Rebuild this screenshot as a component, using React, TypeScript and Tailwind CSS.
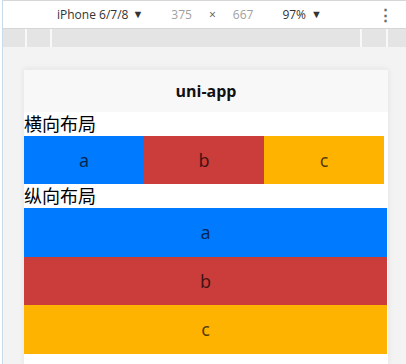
const horizontal = [
  { label: "a", bg: "bg-[#007aff]" },
  { label: "b", bg: "bg-[#cb3d3a]" },
  { label: "c", bg: "bg-[#fdb300]" },
];

const vertical = [
  { label: "a", bg: "bg-[#007aff]", h: "h-[49px]" },
  { label: "b", bg: "bg-[#cb3d3a]", h: "h-[48px]" },
  { label: "c", bg: "bg-[#fdb300]", h: "h-[49px]" },
];

const DevToolbar = () => (
  <div className="flex h-[29px] items-center border-b border-t border-[#d6d6d6] bg-white text-[12px] text-[#333] [font-family:'Open_Sans','Noto_Sans',sans-serif]">
    <span className="ml-[54px]">iPhone 6/7/8</span>
    <span className="ml-[4px] text-[11px]">▼</span>
    <span className="ml-[28px] text-[#a0a0a0]">375</span>
    <span className="ml-[17px] text-[#555]">×</span>
    <span className="ml-[17px] text-[#a0a0a0]">667</span>
    <span className="ml-[29px]">97%</span>
    <span className="ml-[5px] text-[11px]">▼</span>
    <span className="ml-auto mr-[13px] text-[15px] font-bold text-[#666]">⋮</span>
  </div>
);

const Ruler = () => (
  <div className="flex h-[18px] bg-[#e4e4e4]">
    <div className="w-[22px]" />
    <div className="w-[2px] bg-[#f8f8f8]" />
    <div className="w-[23px]" />
    <div className="w-[2px] bg-[#f8f8f8]" />
    <div className="flex-1" />
    <div className="w-[2px] bg-[#f8f8f8]" />
    <div className="w-[24px]" />
    <div className="w-[2px] bg-[#f8f8f8]" />
    <div className="w-[18px]" />
  </div>
);

export default function App() {
  return (
    <div className="flex h-[364px] w-[406px] overflow-hidden bg-[#f3f3f3]">
      <div className="w-[2px] bg-white" />
      <div className="w-px bg-[#c9dcec]" />
      <div className="flex flex-1 flex-col">
        <DevToolbar />
        <Ruler />
        <div className="flex-1 pl-[21px] pt-[22px]">
          <div className="h-full w-[364px] border-t border-[#ececec] bg-white shadow-[0_0_6px_rgba(0,0,0,0.08)]">
            <div className="flex h-[42px] items-center justify-center bg-[#f8f8f8] text-[16px] font-bold text-[#111] [font-family:'Open_Sans','Noto_Sans',sans-serif]">
              uni-app
            </div>
            <div className="text-[18px] text-black [font-family:'Noto_Sans','Noto_Sans_CJK_SC',sans-serif]">
              <div className="h-[24px] leading-[24px]">横向布局</div>
              <div className="flex">
                {horizontal.map((item) => (
                  <div
                    key={item.label}
                    className={`flex h-[48px] w-[120px] items-center justify-center text-black/70 ${item.bg}`}
                  >
                    {item.label}
                  </div>
                ))}
              </div>
              <div className="h-[24px] leading-[24px]">纵向布局</div>
              <div className="flex flex-col">
                {vertical.map((item) => (
                  <div
                    key={item.label}
                    className={`flex w-[363px] items-center justify-center text-black/70 ${item.h} ${item.bg}`}
                  >
                    {item.label}
                  </div>
                ))}
              </div>
            </div>
          </div>
        </div>
      </div>
    </div>
  );
}
